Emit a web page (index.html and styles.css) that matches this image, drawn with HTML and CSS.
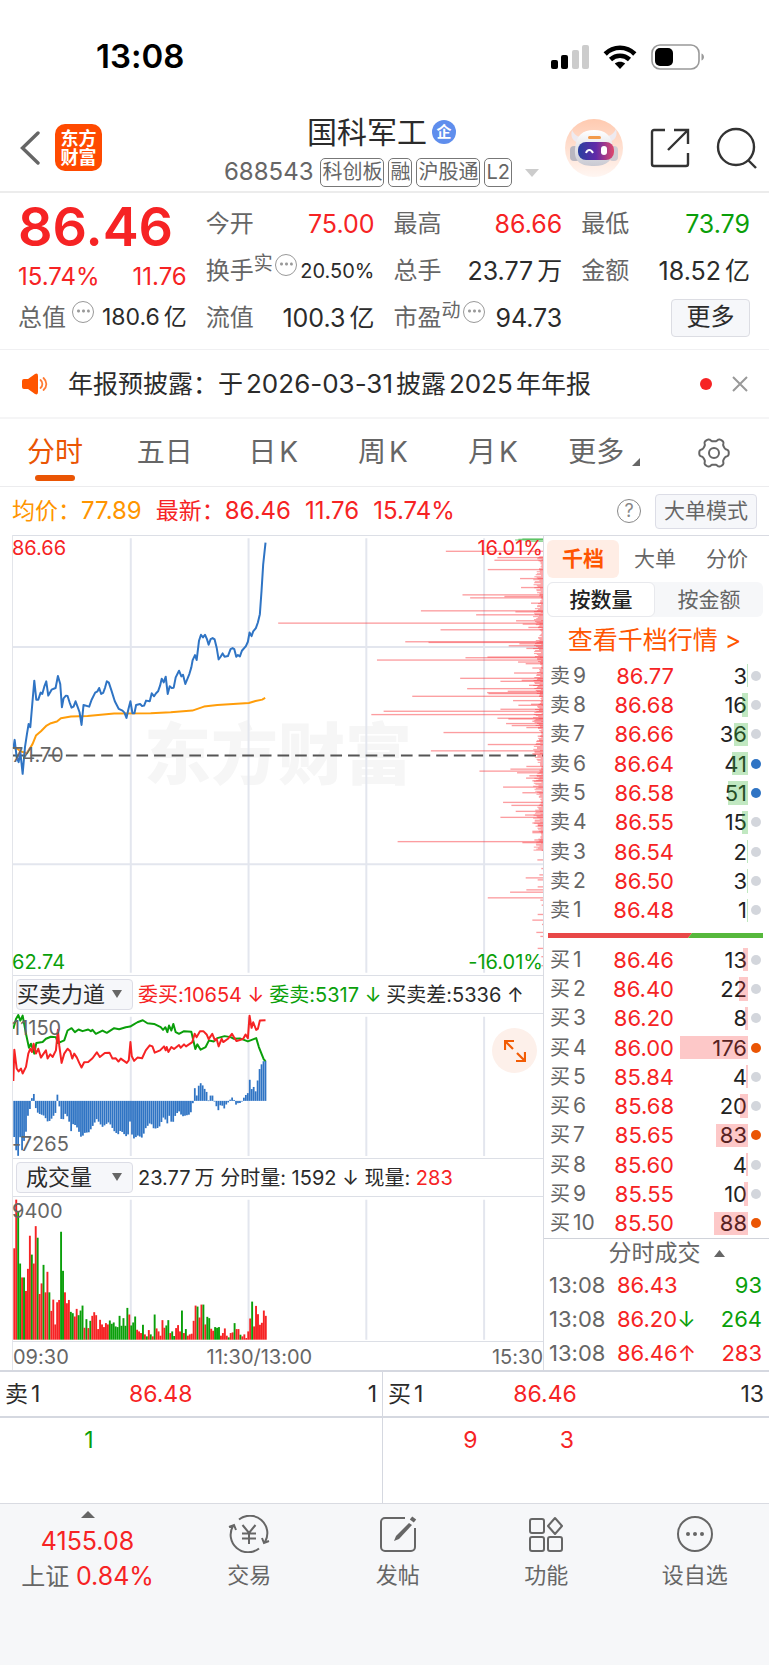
FILE: index.html
```html
<!DOCTYPE html>
<html lang="zh-CN">
<head>
<meta charset="utf-8">
<meta name="viewport" content="width=device-width, initial-scale=1">
<title>国科军工 688543</title>
<link rel="stylesheet" href="styles.css">
</head>
<body>
<div class="status">
  <time class="clock">13:08</time>
  <div class="status-icons">
    <svg width="38" height="24" viewBox="0 0 38 24" aria-hidden="true"><rect x="0" y="15" width="7" height="9" rx="2"/><rect x="10" y="10" width="7" height="14" rx="2"/><rect x="21" y="5" width="7" height="19" rx="2" fill="#ccc"/><rect x="31" y="0" width="7" height="24" rx="2" fill="#ccc"/></svg>
    <svg width="34" height="24" viewBox="0 0 34 24" aria-hidden="true"><g fill="none" stroke="#000" stroke-width="4.6"><path d="M2.2 9C10.5.7 23.500.7 31.800 9"/><path d="M7.500 14.500c5.500-5 13.500-5 19 0"/></g><path d="M11.800 18.500c3-2.500 7.400-2.500 10.400 0L17 24z"/></svg>
    <svg width="54" height="26" viewBox="0 0 54 26" aria-hidden="true"><rect x="1" y="1" width="47" height="24" rx="8" fill="none" stroke="#999" stroke-width="1.600"/><rect x="4" y="4" width="18" height="18" rx="5"/><path d="M50.500 9.500v7c3.300-1.200 3.300-5.800 0-7z" fill="#999"/></svg>
  </div>
</div>

<header class="header">
  <div class="header-left">
    <button class="icon-btn" aria-label="返回"><svg width="20" height="34" viewBox="0 0 20 34" fill="none" stroke="#666" stroke-width="3.400" stroke-linecap="round"><path d="M18 2 2.500 17 18 32"/></svg></button>
    <span class="logo"><span>东方</span><span>财富</span></span>
  </div>
  <div class="title">
    <h1 class="name">国科军工<span class="ent">企</span></h1>
    <div class="code-row"><span class="code">688543</span><span class="tag">科创板</span><span class="tag">融</span><span class="tag">沪股通</span><span class="tag">L2</span><svg class="code-more" width="14" height="8" viewBox="0 0 14 8" aria-hidden="true"><path d="M0 0h14L7 8z" fill="#ccc"/></svg></div>
  </div>
  <div class="header-right">
    <button class="icon-btn" aria-label="助手"><svg width="60" height="60" viewBox="0 0 60 60">
      <defs><linearGradient id="rb" x1="0" y1="0" x2="0" y2="1"><stop offset="0" stop-color="#ffcab0"/><stop offset="1" stop-color="#fff6f2"/></linearGradient><linearGradient id="vis" x1="0" y1="0" x2="1" y2="0"><stop offset="0" stop-color="#28409f"/><stop offset=".5" stop-color="#612aa8"/><stop offset="1" stop-color="#e0486b"/></linearGradient><linearGradient id="hd" x1="0" y1="0" x2="0" y2="1"><stop offset="0" stop-color="#fff"/><stop offset="1" stop-color="#c9c9d2"/></linearGradient></defs>
      <circle cx="30" cy="30" r="29" fill="url(#rb)"/>
      <path d="M8 12c-2 7 1 12 8 13l5-6c-6 1-10-1-13-7zM52 11c2 7-1 12-8 13l-5-6c6 1 10-1 13-7z" fill="#eeeaf0"/>
      <rect x="6" y="28" width="10" height="15" rx="4" fill="#b9b7c0"/><rect x="45" y="28" width="9" height="15" rx="4" fill="#cfccd3"/>
      <path d="M11 31c1-14 8-19 19-19s18 5 19 18c1 12-6 18-19 18S10 44 11 31z" fill="url(#hd)"/>
      <rect x="14" y="24" width="36" height="18" rx="8" fill="url(#vis)"/><rect x="24" y="18" width="13" height="3" rx="1.500" fill="#f29a4a"/>
      <path d="M22 35c1.500-4 5-4 7 0" fill="none" stroke="#fff" stroke-width="2"/><rect x="37" y="28" width="6" height="9" rx="3" fill="#fff"/>
    </svg></button>
    <button class="icon-btn" aria-label="分享"><svg width="40" height="40" viewBox="0 0 40 40" fill="none" stroke="#333" stroke-width="2.400"><path d="M15 2H4a2 2 0 0 0-2 2v32a2 2 0 0 0 2 2h32a2 2 0 0 0 2-2V25M24 2h14v14M38 2 18 22"/></svg></button>
    <button class="icon-btn" aria-label="搜索"><svg width="42" height="42" viewBox="0 0 42 42" fill="none" stroke="#333" stroke-width="2.400"><circle cx="20" cy="20" r="18"/><path d="m32 33 8 8"/></svg></button>
  </div>
</header>

<section class="quote">
  <div class="q-main"><strong class="price">86.46</strong><div class="pair red"><span class="v">15.74%</span><span class="v">11.76</span></div></div>
  <div class="pair"><span class="k">今开</span><span class="v red">75.00</span></div>
  <div class="pair"><span class="k">最高</span><span class="v red">86.66</span></div>
  <div class="pair"><span class="k">最低</span><span class="v green">73.79</span></div>
  <div class="pair"><span class="k">换手<span class="sup">实</span><i class="dots"></i></span><span class="v small">20.50%</span></div>
  <div class="pair"><span class="k">总手</span><span class="v">23.77<b>万</b></span></div>
  <div class="pair"><span class="k">金额</span><span class="v">18.52<b>亿</b></span></div>
  <div class="pair"><span class="k">总值<i class="dots spaced"></i></span><span class="v mid">180.6<b>亿</b></span></div>
  <div class="pair"><span class="k">流值</span><span class="v">100.3<b>亿</b></span></div>
  <div class="pair"><span class="k">市盈<span class="sup">动</span><i class="dots"></i></span><span class="v">94.73</span></div>
  <div class="pair end"><button class="more">更多</button></div>
</section>

<section class="notice">
  <svg width="26" height="22" viewBox="0 0 26 22" aria-hidden="true"><path d="M2 6h4l7-5q3-1.500 3 2v16q0 3.500-3 2l-7-5H2q-2 0-2-2V8q0-2 2-2z" fill="#ff5500"/><path d="M18.500 7c2.500 2 2.500 6 0 8M21.500 5c3.800 3.500 3.800 8.500 0 12" fill="none" stroke="#ff7a33" stroke-width="1.800" stroke-linecap="round"/></svg>
  <p>年报预披露：于<span class="n">2026-03-31</span>披露<span class="n">2025</span>年年报</p>
  <i class="reddot"></i>
  <button class="icon-btn" aria-label="关闭"><svg width="16" height="16" viewBox="0 0 16 16" stroke="#999" stroke-width="2"><path d="m1 1 14 14M15 1 1 15"/></svg></button>
</section>

<nav class="tabs">
  <button class="tab on">分时</button><button class="tab">五日</button><button class="tab">日<span class="n">K</span></button><button class="tab">周<span class="n">K</span></button><button class="tab">月<span class="n">K</span></button>
  <button class="tab">更多<svg class="corner" width="8" height="8" viewBox="0 0 8 8" aria-hidden="true"><path d="M8 0v8H0z" fill="#666"/></svg></button>
  <button class="tab" aria-label="设置"><svg width="32" height="30" viewBox="0 0 32 30" fill="none" stroke="#666" stroke-width="2"><path id="gear" stroke-linejoin="round"/><circle cx="16" cy="15" r="5"/></svg></button>
</nav>

<section class="info">
  <span class="orange">均价：<span class="num">77.89</span></span><span class="red">最新：<span class="num">86.46</span></span><span class="red num">11.76</span><span class="red num">15.74%</span>
  <button class="help" aria-label="帮助">?</button><button class="mode">大单模式</button>
</section>

<main class="board">
  <div class="charts">
    <figure class="chart price-chart">
      <span class="watermark">东方财富</span>
      <svg viewBox="36 15 1593 1320" preserveAspectRatio="none" aria-hidden="true">
        <path class="grid-line" d="M390 22V1328M744 22V1328M1098 22V1328M1452 22V1328M36 349H1629M36 1002H1629"/>
        <path class="base-line" d="M36 675H1629"/>
        <g id="distribution"></g>
        <path class="avg" d="M41 655 50 655 60 663 78 668 95 640 105 615 120 602 137 585 150 578 168 573 180 563 210 558 260 556 340 549 450 548 510 545 575 540 610 528 650 523 745 517 765 511 785 507 794 502"/>
        <path class="now" d="M37 655 41 628 47 680 53 695 58 665 65 730 72 650 78 610 83 580 88 590 94 520 100 450 106 507 112 507 119 486 124 490 130 468 136 452 142 495 152 477 164 472 171 436 178 460 183 530 188 503 195 495 200 496 206 515 212 531 218 528 224 512 230 528 236 545 242 583 248 523 265 528 272 508 283 486 290 482 295 472 301 490 307 487 313 470 318 452 324 456 332 480 342 512 354 535 365 540 371 546 377 562 383 535 389 512 395 548 401 548 406 523 418 520 424 526 430 525 436 510 447 512 453 488 460 497 466 488 472 482 478 465 483 444 489 455 495 438 501 490 507 467 513 472 519 471 525 440 535 420 542 437 547 432 554 460 566 430 572 410 576 388 583 373 588 388 595 330 601 312 607 320 613 312 619 325 624 342 630 325 636 322 642 326 648 350 654 386 660 378 666 368 672 378 682 376 690 355 696 352 701 355 707 378 712 373 718 377 724 360 736 346 742 333 747 305 753 316 758 302 766 292 772 275 778 250 783 180 788 100 795 35"/>
      </svg>
      <span class="lab tl red">86.66</span><span class="lab tr red">16.01%</span><span class="lab ml">74.70</span><span class="lab bl green">62.74</span><span class="lab br green">-16.01%</span>
    </figure>
    <div class="ind-row">
      <label class="pick"><select aria-label="指标一"><option>买卖力道</option></select></label>
      <span class="red">委买:10654 ↓</span><span class="green">委卖:5317 ↓</span><span>买卖差:5336 ↑</span>
    </div>
    <figure class="chart sub-chart">
      <svg viewBox="36 130 1593 436" preserveAspectRatio="none" aria-hidden="true">
        <path class="grid-line" d="M390 138V560M744 138V560M1098 138V560M1452 138V560"/>
        <g id="force" fill="#2f74c4"></g>
        <path class="sell" d="M37 175 45 145 52 133 58 150 65 135 75 190 84 232 90 220 100 250 106 218 125 215 135 205 150 199 165 200 171 218 190 210 200 180 212 173 222 185 233 177 245 182 262 177 270 182 275 178 285 190 305 180 318 187 340 173 355 176 375 170 388 168 398 162 410 155 426 149 440 158 460 160 480 170 487 178 494 170 500 185 505 165 512 180 518 160 525 185 535 190 550 182 572 184 584 236 590 222 600 238 615 230 625 210 640 213 650 203 672 197 690 200 700 205 718 204 742 213 767 203 775 230 790 268 795 272"/>
        <path class="buy" d="M37 333 40 238 47 295 53 304 60 295 65 310 75 290 82 250 88 235 93 245 98 220 105 250 112 235 120 262 128 250 135 240 140 265 148 252 155 260 165 240 171 178 175 225 182 278 190 250 200 235 208 243 214 265 220 250 228 262 235 278 242 292 250 276 262 275 275 264 288 246 297 260 312 248 326 247 335 265 345 264 353 274 360 265 378 278 384 270 389 215 393 258 400 272 410 262 424 264 435 240 447 225 455 228 462 247 478 240 490 228 495 240 498 230 503 245 512 230 520 236 535 224 540 232 550 222 556 228 575 215 582 190 588 200 598 182 608 182 618 192 624 206 635 190 643 210 648 205 654 228 663 205 668 215 682 205 694 190 700 200 708 212 720 208 728 205 735 192 742 203 747 135 753 172 758 155 767 178 772 175 778 150 795 149"/>
      </svg>
      <span class="lab tl2">11150</span><span class="lab bl2">-7265</span>
      <button class="expand" aria-label="放大"><svg width="22" height="22" viewBox="0 0 22 22" fill="none" stroke="#f25c05" stroke-width="2.200"><path d="M1 10V1h9M1 1l8 8M21 12v9h-9M21 21l-8-8"/></svg></button>
    </figure>
    <div class="ind-row">
      <label class="pick center"><select aria-label="指标二"><option>成交量</option></select></label>
      <span>23.77<b>万</b> 分时量: 1592 ↓ 现量: <em class="red">283</em></span>
    </div>
    <figure class="chart sub-chart">
      <svg viewBox="36 679 1593 435" preserveAspectRatio="none" aria-hidden="true">
        <path class="grid-line" d="M390 687V1110M744 687V1110M1098 687V1110M1452 687V1110"/>
        <g id="volume"></g>
      </svg>
      <span class="lab tl2">9400</span>
    </figure>
    <div class="axis"><span>09:30</span><span class="noon">11:30/13:00</span><span>15:30</span></div>
  </div>

  <aside class="depth">
    <div class="depth-tabs"><button class="on">千档</button><button>大单</button><button>分价</button></div>
    <div class="seg"><button class="on">按数量</button><button>按金额</button></div>
    <a class="depth-link" href="#depth">查看千档行情 &gt;</a>
    <table class="ladder asks" id="asks"></table>
    <div class="ratio"><svg viewBox="0 0 215 5" preserveAspectRatio="none" aria-hidden="true"><path d="M0 0h144l-4 5H0z" fill="#e84848"/><path d="M144 0h71v5h-75z" fill="#56b83c"/></svg></div>
    <table class="ladder bids" id="bids"></table>
    <button class="deals-head">分时成交<svg width="11" height="7" viewBox="0 0 11 7" aria-hidden="true"><path d="M0 7h11L5.500 0z" fill="#666"/></svg></button>
    <table class="deals">
      <tr><td>13:08</td><td class="red">86.43</td><td class="green">93</td></tr>
      <tr><td>13:08</td><td class="red">86.20<span class="green">↓</span></td><td class="green">264</td></tr>
      <tr><td>13:08</td><td class="red">86.46<span>↑</span></td><td class="red">283</td></tr>
    </table>
  </aside>
</main>

<section class="queue">
  <div class="side"><div class="q-head"><span>卖<span class="n">1</span></span><span class="red">86.48</span><span>1</span></div><div class="q-body green"><span>1</span></div></div>
  <div class="side"><div class="q-head"><span>买<span class="n">1</span></span><span class="red">86.46</span><span>13</span></div><div class="q-body red"><span>9</span><span>3</span></div></div>
</section>

<nav class="bottom">
  <a class="index" href="#index"><svg width="14" height="7" viewBox="0 0 14 7" aria-hidden="true"><path d="M0 7h14L7 0z" fill="#666"/></svg><span class="red num">4155.08</span><span>上证 <em class="red num">0.84%</em></span></a>
  <a href="#trade"><svg width="42" height="38" viewBox="0 0 42 38" fill="none" stroke="#666" stroke-width="2"><path d="M11 4.500A17.500 17.500 0 0 1 37 27M31 33.500A17.500 17.500 0 0 1 5 11M1 12l5-2 2 5M41 26l-5 2-2-5M14.500 10l6.500 8 6.500-8M14 18.500h14M14 23.500h14M21 18v11"/></svg>交易</a>
  <a href="#post"><svg width="38" height="38" viewBox="0 0 38 38" fill="none" stroke="#666" stroke-width="2"><path d="M26 3H6a4 4 0 0 0-4 4v25a4 4 0 0 0 4 4h26a4 4 0 0 0 4-4V13"/><path d="m30 8 3 2-13 14-5 2 2-5z" fill="#666" stroke="none"/><path d="m32 3 4 3" stroke-width="4"/></svg>发帖</a>
  <a href="#tools"><svg width="36" height="38" viewBox="0 0 36 38" fill="none" stroke="#666" stroke-width="2"><rect x="2" y="4" width="14" height="14" rx="2"/><rect x="2" y="22" width="14" height="14" rx="2"/><rect x="20" y="22" width="14" height="14" rx="2"/><path d="m27 3 7 8-7 8-7-8z" stroke-linejoin="round"/></svg>功能</a>
  <a href="#fav"><svg width="38" height="38" viewBox="0 0 38 38" fill="none" stroke="#666" stroke-width="2"><circle cx="19" cy="19" r="17"/><g fill="#666" stroke="none"><circle cx="12" cy="19" r="2"/><circle cx="19" cy="19" r="2"/><circle cx="26" cy="19" r="2"/></g></svg>设自选</a>
</nav>
<script src="app.js"></script>
</body>
</html>
```
FILE: styles.css
```css
* { box-sizing: border-box; }
body { margin: 0; background: #fff; color: #2b2b2b; font-family: Inter, "Noto Sans CJK SC", sans-serif; font-size: 24px; line-height: 1.2; font-feature-settings: "calt" 0; }
button, select { font: inherit; color: inherit; background: none; border: 0; padding: 0; margin: 0; }
a { color: inherit; text-decoration: none; }
svg { display: block; }
b, em { font-weight: inherit; font-style: normal; }
b { margin-left: 4px; }
.n { margin: 0 3px; }
h1, p, figure { margin: 0; font-weight: 400; }
.red { color: #f62324; }
.green { color: #0a9f0a; }
.orange { color: #ff9500; }

.status { display: flex; justify-content: space-between; align-items: center; height: 100px; padding: 14px 64px 0 96px; color: #000; }
.clock { font-size: 33px; font-weight: 600; }
.status-icons { display: flex; align-items: center; gap: 14px; }

.header { display: grid; grid-template-columns: 1fr auto 1fr; align-items: center; height: 93px; border-bottom: 2px solid #ececec; padding: 4px 11px 0 20px; }
.header-left, .header-right { display: flex; align-items: center; }
.header-left { gap: 15px; }
.header-right { justify-content: flex-end; gap: 26px; }
.icon-btn { display: block; }
.logo { display: flex; flex-direction: column; align-items: center; justify-content: center; width: 47px; height: 47px; border-radius: 10px; background: #ff4a00; color: #fff; font-size: 18px; font-weight: 700; line-height: 19px; }
.title { display: flex; flex-direction: column; align-items: center; gap: 7px; padding-top: 5px; margin-right: 15px; }
.name { display: flex; align-items: center; gap: 5px; font-size: 30px; line-height: 38px; }
.ent { width: 24px; height: 24px; border-radius: 50%; background: #5f8eed; color: #fff; font-size: 15px; font-weight: 700; line-height: 23px; text-align: center; }
.code-row { display: flex; align-items: center; gap: 4px; }
.code { color: #666; font-size: 24px; margin-right: 3px; }
.tag { border: 1px solid #777; border-radius: 5px; padding: 0 1px; color: #666; font-size: 20px; line-height: 27px; white-space: nowrap; }
.code-more { margin-left: 9px; }

.quote { display: grid; grid-template-columns: repeat(4, minmax(0, 1fr)); grid-auto-rows: 47px; column-gap: 19px; padding: 7px 19px 8px 18px; border-bottom: 1px solid #f0f0f2; }
.q-main { grid-row: span 2; display: flex; flex-direction: column; }
.price { color: #f62324; font-size: 54px; font-weight: 600; line-height: 54px; }
.q-main .pair { margin-top: 9px; }
.q-main .v { font-size: 24px; }
.pair { display: flex; justify-content: space-between; align-items: center; white-space: nowrap; }
.pair.end { justify-content: flex-end; }
.k { display: flex; color: #666; line-height: 34px; }
.v { font-size: 25px; }
.v.small { font-size: 20px; }
.v.mid { font-size: 23px; }
.sup { font-size: 19px; line-height: 20px; }
.dots { width: 22px; height: 22px; border: 1px solid #999; border-radius: 50%; background: radial-gradient(circle, #999 1px, transparent 2px) 0 0 / 5px 18px content-box; padding: 0 3px; margin-left: 2px; }
.dots.spaced { margin-left: 6px; }
.more { width: 79px; height: 38px; border: 1px solid #dcdde3; border-radius: 4px; background: #f6f7fa; }

.notice { display: flex; align-items: center; height: 69px; padding: 0 21px 0 22px; border-bottom: 2px solid #f5f5f6; }
.notice p { flex: 1; margin-left: 20px; font-size: 25px; white-space: nowrap; }
.notice .n { font-size: 26px; }
.reddot { width: 12px; height: 12px; margin-right: 20px; border-radius: 50%; background: #f62324; }

.tabs { display: grid; grid-template-columns: repeat(7, 1fr); height: 68px; border-bottom: 1px solid #ececee; color: #666; font-size: 28px; }
.tab { position: relative; display: flex; align-items: center; justify-content: center; }
.tab.on { color: #ea5504; }
.tab.on::after { content: ""; position: absolute; bottom: 5px; left: 50%; width: 40px; height: 6px; margin-left: -20px; border-radius: 3px; background: #ea5504; }
.corner { align-self: flex-end; margin: 0 0 20px 8px; }

.info { display: flex; align-items: center; gap: 14px; height: 48px; padding: 0 12px; font-size: 23px; white-space: nowrap; }
.info .num { font-size: 24px; }
.help { width: 24px; height: 24px; margin-left: auto; border: 1px solid #888; border-radius: 50%; color: #888; font-size: 18px; line-height: 20px; }
.mode { height: 35px; padding: 0 8px; border: 1px solid #dcdde6; border-radius: 4px; background: #f6f7fa; color: #666; font-size: 21px; }

.board { display: grid; grid-template-columns: minmax(0, 1fr) 225px; padding-left: 12px; }
.charts { min-width: 0; border-left: 1px solid #e3e5ea; border-right: 1px solid #d9dbe2; }
.chart { position: relative; border-top: 1px solid #dcdfe6; border-bottom: 1px solid #dcdfe6; }
.chart svg { position: relative; width: 100%; height: 100%; }
.price-chart { height: 441px; }
.sub-chart { height: 146px; }
.watermark { position: absolute; top: 0; left: 0; right: 0; text-align: center; font-size: 67px; font-weight: 900; line-height: 438px; color: #f6f6f6; }
.grid-line { fill: none; stroke: #e3e6ee; stroke-width: 6; }
.base-line { fill: none; stroke: #555; stroke-width: 6; stroke-dasharray: 35 18; }
.avg, .now, .buy, .sell { fill: none; stroke-width: 6; stroke-linejoin: round; }
.avg { stroke: #ff9d0a; }
.now { stroke: #2f74c4; }
.buy { stroke: #f62324; }
.sell { stroke: #0a9f0a; }
.lab { position: absolute; font-size: 20px; line-height: 22px; color: #666; }
.lab.red { color: #f62324; }
.lab.green { color: #0a9f0a; }
.tl { top: 1px; left: -1px; }
.tr { top: 1px; right: 0; }
.ml { top: 208px; left: -1px; }
.bl { bottom: 2px; left: -1px; }
.br { bottom: 2px; right: 0; }
.tl2 { top: 3px; left: -1px; }
.bl2 { bottom: 3px; left: -1px; }
.ind-row { display: flex; align-items: center; gap: 5px; height: 37px; padding-left: 3px; font-size: 20px; white-space: nowrap; }
.pick { position: relative; width: 117px; height: 31px; flex: none; }
.pick select { appearance: none; width: 100%; height: 100%; padding: 0; border: 1px solid #dcdde6; border-radius: 4px; background: #f6f7fa; font-size: 22px; }
.pick.center select { padding-left: 9px; }
.pick::after { content: ""; position: absolute; top: 11px; right: 11px; border: 5px solid transparent; border-top: 8px solid #666; border-bottom: 0; }
.chart .expand { position: absolute; top: 14px; right: 6px; display: grid; place-items: center; width: 45px; height: 45px; border-radius: 50%; background: #fdf0ea; }
.chart .expand svg { width: 22px; height: 22px; }
.axis { display: flex; justify-content: space-between; height: 28px; color: #666; font-size: 20px; line-height: 31px; }
.noon { margin-right: 42px; }

.depth { display: flex; flex-direction: column; border-top: 1px solid #d9dbe2; }
.depth-tabs { display: grid; grid-template-columns: repeat(3, 1fr); margin: 4px 6px 0 3px; font-size: 21px; color: #666; }
.depth-tabs button { height: 38px; }
.depth-tabs .on { border-radius: 6px; background: #ffede5; color: #ff5500; font-weight: 700; }
.seg { display: grid; grid-template-columns: 1fr 1fr; margin: 4px 6px 0 3px; border-radius: 6px; background: #f6f7f9; font-size: 21px; color: #666; }
.seg button { height: 35px; }
.seg .on { border: 1px solid #e8e9ed; border-radius: 6px; background: #fff; color: #222; font-weight: 500; }
.depth-link { margin-top: 6px; padding-right: 4px; color: #ff5500; font-size: 25px; line-height: 34px; text-align: center; white-space: nowrap; }
.ladder { border-collapse: collapse; table-layout: fixed; width: 219px; font-size: 22px; line-height: 24px; }
.asks { height: 264px; margin-top: 4px; }
.bids { height: 293px; }
.ladder td { padding: 0; text-align: right; }
.ladder td:first-child { width: 60px; padding-left: 6px; color: #666; font-size: 20px; text-align: left; white-space: nowrap; }
.ladder .n { margin: 0 0 0 3px; font-size: 21px; }
.ladder td:nth-child(2) { width: 70px; }
.ladder td:last-child { width: 15px; }
.vol { position: relative; }
.vol > span { display: block; padding-right: 1px; color: #222; }
.bar { position: absolute; z-index: 1; top: 3px; bottom: 3px; right: 0; }
.asks .bar { background: rgba(50, 180, 50, .3); }
.bids .bar { background: rgba(246, 35, 36, .25); }
.pip { display: block; width: 10px; height: 10px; margin-left: 3px; border-radius: 50%; background: #d3d6dc; }
.pip.blue { background: #2f74c4; }
.pip.hot { background: #ea5504; }
.ratio { height: 20px; padding: 8px 6px 0 4px; }
.ratio svg { width: 100%; height: 5px; }
.deals-head { display: flex; align-items: center; justify-content: center; gap: 13px; height: 30px; padding-left: 20px; border-top: 1px solid #d0d3da; color: #666; font-size: 23px; }
.deals { border-collapse: collapse; width: 218px; font-size: 22px; line-height: 26px; }
.deals td { padding: 0; height: 34px; }
.deals td:first-child { width: 73px; padding-left: 5px; color: #666; }
.deals td:last-child { text-align: right; }

.queue { display: grid; grid-template-columns: 382fr 387fr; height: 133px; border-top: 2px solid #d5d8e0; font-size: 23px; }
.side + .side { border-left: 1px solid #d5d8e0; }
.q-head { display: grid; grid-template-columns: 1fr 1fr 1fr; align-items: center; height: 46px; padding: 2px 5px 0; border-bottom: 2px solid #d5d8e0; }
.q-head > :nth-child(3) { text-align: right; }
.q-body { display: grid; grid-template-columns: repeat(4, 1fr); padding-top: 9px; }
.q-body span { padding-right: 2px; text-align: right; }

.bottom { display: grid; grid-template-columns: 175px repeat(4, 1fr); min-height: 162px; border-top: 1px solid #d9dbe2; background: #f6f7f9; color: #666; font-size: 22px; }
.bottom a { display: flex; flex-direction: column; align-items: center; gap: 6px; padding-top: 11px; line-height: 32px; }
.bottom .index { gap: 0; padding-top: 7px; font-size: 24px; }
.bottom .index svg { margin-bottom: 6px; }
.bottom .index > span { line-height: 35px; white-space: nowrap; }
.bottom .num { font-size: 25px; }
```
FILE: app.js
```javascript
const svgNS = 'http://www.w3.org/2000/svg';
function rect(parent, x, y, w, h, fill) {
  const r = document.createElementNS(svgNS, 'rect');
  const attrs = { x, y, width: w, height: h };
  for (const k in attrs) r.setAttribute(k, attrs[k]);
  if (fill) r.setAttribute('fill', fill);
  parent.appendChild(r);
}

// Settings gear outline: a circle modulated by six soft teeth.
let gear = '';
for (let i = 0; i <= 120; i++) {
  const a = i / 120 * Math.PI * 2;
  const r = 13.2 + 1.6 * Math.tanh(2 * Math.cos(6 * a));
  gear += (i ? 'L' : 'M') + (16 + r * Math.cos(a)).toFixed(2) + ' ' + (15 + r * Math.sin(a)).toFixed(2);
}
document.getElementById('gear').setAttribute('d', gear + 'Z');

// Volume-by-price bars: left end, level.
const levels = [[527,61],[682,80],[673,88],[653,116],[750,143],[753,170],[577,192],[600,201],[703,197],[783,217],[452,240],[736,243],[618,252],[738,270],[23,277],[758,280],[775,290],[511,297],[405,333],[475,335],[748,339],[716,345],[769,353],[586,381],[652,379],[320,388],[744,394],[767,399],[787,412],[732,427],[570,443],[691,452],[755,449],[777,464],[591,474],[713,482],[651,486],[655,489],[426,497],[729,510],[745,524],[783,521],[691,536],[340,542],[303,552],[682,563],[715,565],[787,572],[708,579],[725,585],[769,591],[520,606],[803,617],[801,631],[653,642],[482,661],[787,670],[769,708],[721,716],[628,722],[741,727],[778,736],[768,743],[787,751],[699,770],[757,787],[699,816],[724,825],[737,843],[765,854],[691,861],[787,878],[803,886],[787,903],[787,907],[793,929],[382,934],[757,937],[815,960],[802,989],[814,1015],[808,1034],[767,1043],[803,1049],[803,1070],[769,1079],[720,1086],[653,1103],[811,1110],[815,1125],[803,1153],[787,1170],[816,1183],[799,1207],[811,1219],[803,1255],[814,1280],[814,1307]];
const dist = document.getElementById('distribution');
for (const [x, y] of levels) rect(dist, x + 810, y - 2, 819 - x, 4, 'rgba(250,60,65,.5)');
for (let y = 76; y < 960; y += 3) {
  const w = 4 + Math.abs(Math.sin(y * 1.7) * Math.sin(y * 0.031)) * 26;
  rect(dist, 1629 - w, y, w, 3, 'rgba(250,60,65,.5)');
}
for (const [x, y] of [[757, 24], [735, 27], [745, 25], [765, 31]]) rect(dist, x + 810, y - 2, 819 - x, 4, 'rgba(50,180,60,.5)');

// Buy/sell force difference, interpolated to one bar per minute.
const force = [37,480,45,540,52,560,58,500,65,553,70,510,78,475,84,408,88,420,93,385,100,370,106,425,115,432,130,438,142,458,150,450,165,428,168,400,171,357,175,400,177,428,184,458,195,428,205,455,211,485,218,460,230,475,242,505,252,490,265,488,288,448,305,472,325,457,340,484,352,495,360,482,376,500,384,493,388,455,394,495,400,507,412,498,425,505,435,476,450,458,460,478,475,474,490,440,500,462,506,438,515,465,525,435,535,424,545,440,565,435,573,425,578,393,583,353,589,378,595,345,601,339,607,347,613,358,618,365,624,392,630,377,637,377,643,397,648,410,654,422,660,405,666,408,672,417,678,402,684,397,694,382,700,388,706,405,712,400,718,400,726,392,735,374,741,380,747,323,753,360,758,345,765,368,771,335,777,298,783,283,789,273,796,271];
const forceGroup = document.getElementById('force');
for (let i = 0; i < 129; i++) {
  const x = 40 + i * 5.9;
  let j = 0;
  while (j < force.length - 4 && force[j + 2] < x) j += 2;
  const t = (x - force[j]) / (force[j + 2] - force[j]);
  const y = force[j + 1] + t * (force[j + 3] - force[j + 1]);
  rect(forceGroup, x - 3, Math.min(y, 393), 5.3, Math.max(Math.abs(y - 393), 2));
}

// Minute volume: colour and bar top.
const volume = 'r834 r687 g722 g880 r922 g922 r963 r896 r796 g853 r880 r767 g802 r972 r940 g884 r967 r905 g967 r1023 r989 r1064 r997 r990 g784 g902 r967 r1000 r990 g1026 g1030 r1040 r1017 g1036 g1022 g1007 r1074 g1048 r1075 g1053 r1038 r1027 r1036 r1078 r1050 r1064 r1072 r1060 r1064 g1052 g1062 g1058 g1070 g1072 g1038 g1068 g1045 g1068 g1014 r1034 g1067 g1058 g1040 r1080 r1085 r1090 g1065 r1094 g1100 r1081 g1094 r1100 g1034 r1076 r1085 r1098 r1051 r1074 g1067 g1051 r1090 g1085 g1099 r1075 r1066 r1085 g1022 r1090 g1078 r1098 r1094 r1092 r1053 r1007 g1010 r1043 r1004 g1004 r1064 g1041 g1045 r1077 r1083 g1072 g1074 g1072 r1098 r1090 r1076 r1098 g1103 r1090 r1088 g1060 r1078 r1078 g1095 r1100 r1094 r1105 r1085 r1046 g995 r1070 r1008 r1033 r1065 r1059 r1022 r1038'.split(' ');
const volGroup = document.getElementById('volume');
volume.forEach((v, i) => rect(volGroup, 37 + i * 5.86, +v.slice(1), 5.7, 1110 - v.slice(1), v[0] === 'r' ? '#f62324' : '#0a9f0a'));

function ladder(id, side, rows) {
  document.getElementById(id).innerHTML = rows.map(([n, price, qty, pip]) =>
    `<tr><td>${side}<span class="n">${n}</span></td><td class="red">${price}</td><td class="vol"><span>${qty}</span><i class="bar" style="width:${Math.max(1, Math.round(qty * 68 / 176))}px"></i></td><td><i class="pip ${pip || ''}"></i></td></tr>`).join('');
}
ladder('asks', '卖', [[9,'86.77',3],[8,'86.68',16],[7,'86.66',36],[6,'86.64',41,'blue'],[5,'86.58',51,'blue'],[4,'86.55',15],[3,'86.54',2],[2,'86.50',3],[1,'86.48',1]]);
ladder('bids', '买', [[1,'86.46',13],[2,'86.40',22],[3,'86.20',8],[4,'86.00',176,'hot'],[5,'85.84',4],[6,'85.68',20],[7,'85.65',83,'hot'],[8,'85.60',4],[9,'85.55',10],[10,'85.50',88,'hot']]);
```
